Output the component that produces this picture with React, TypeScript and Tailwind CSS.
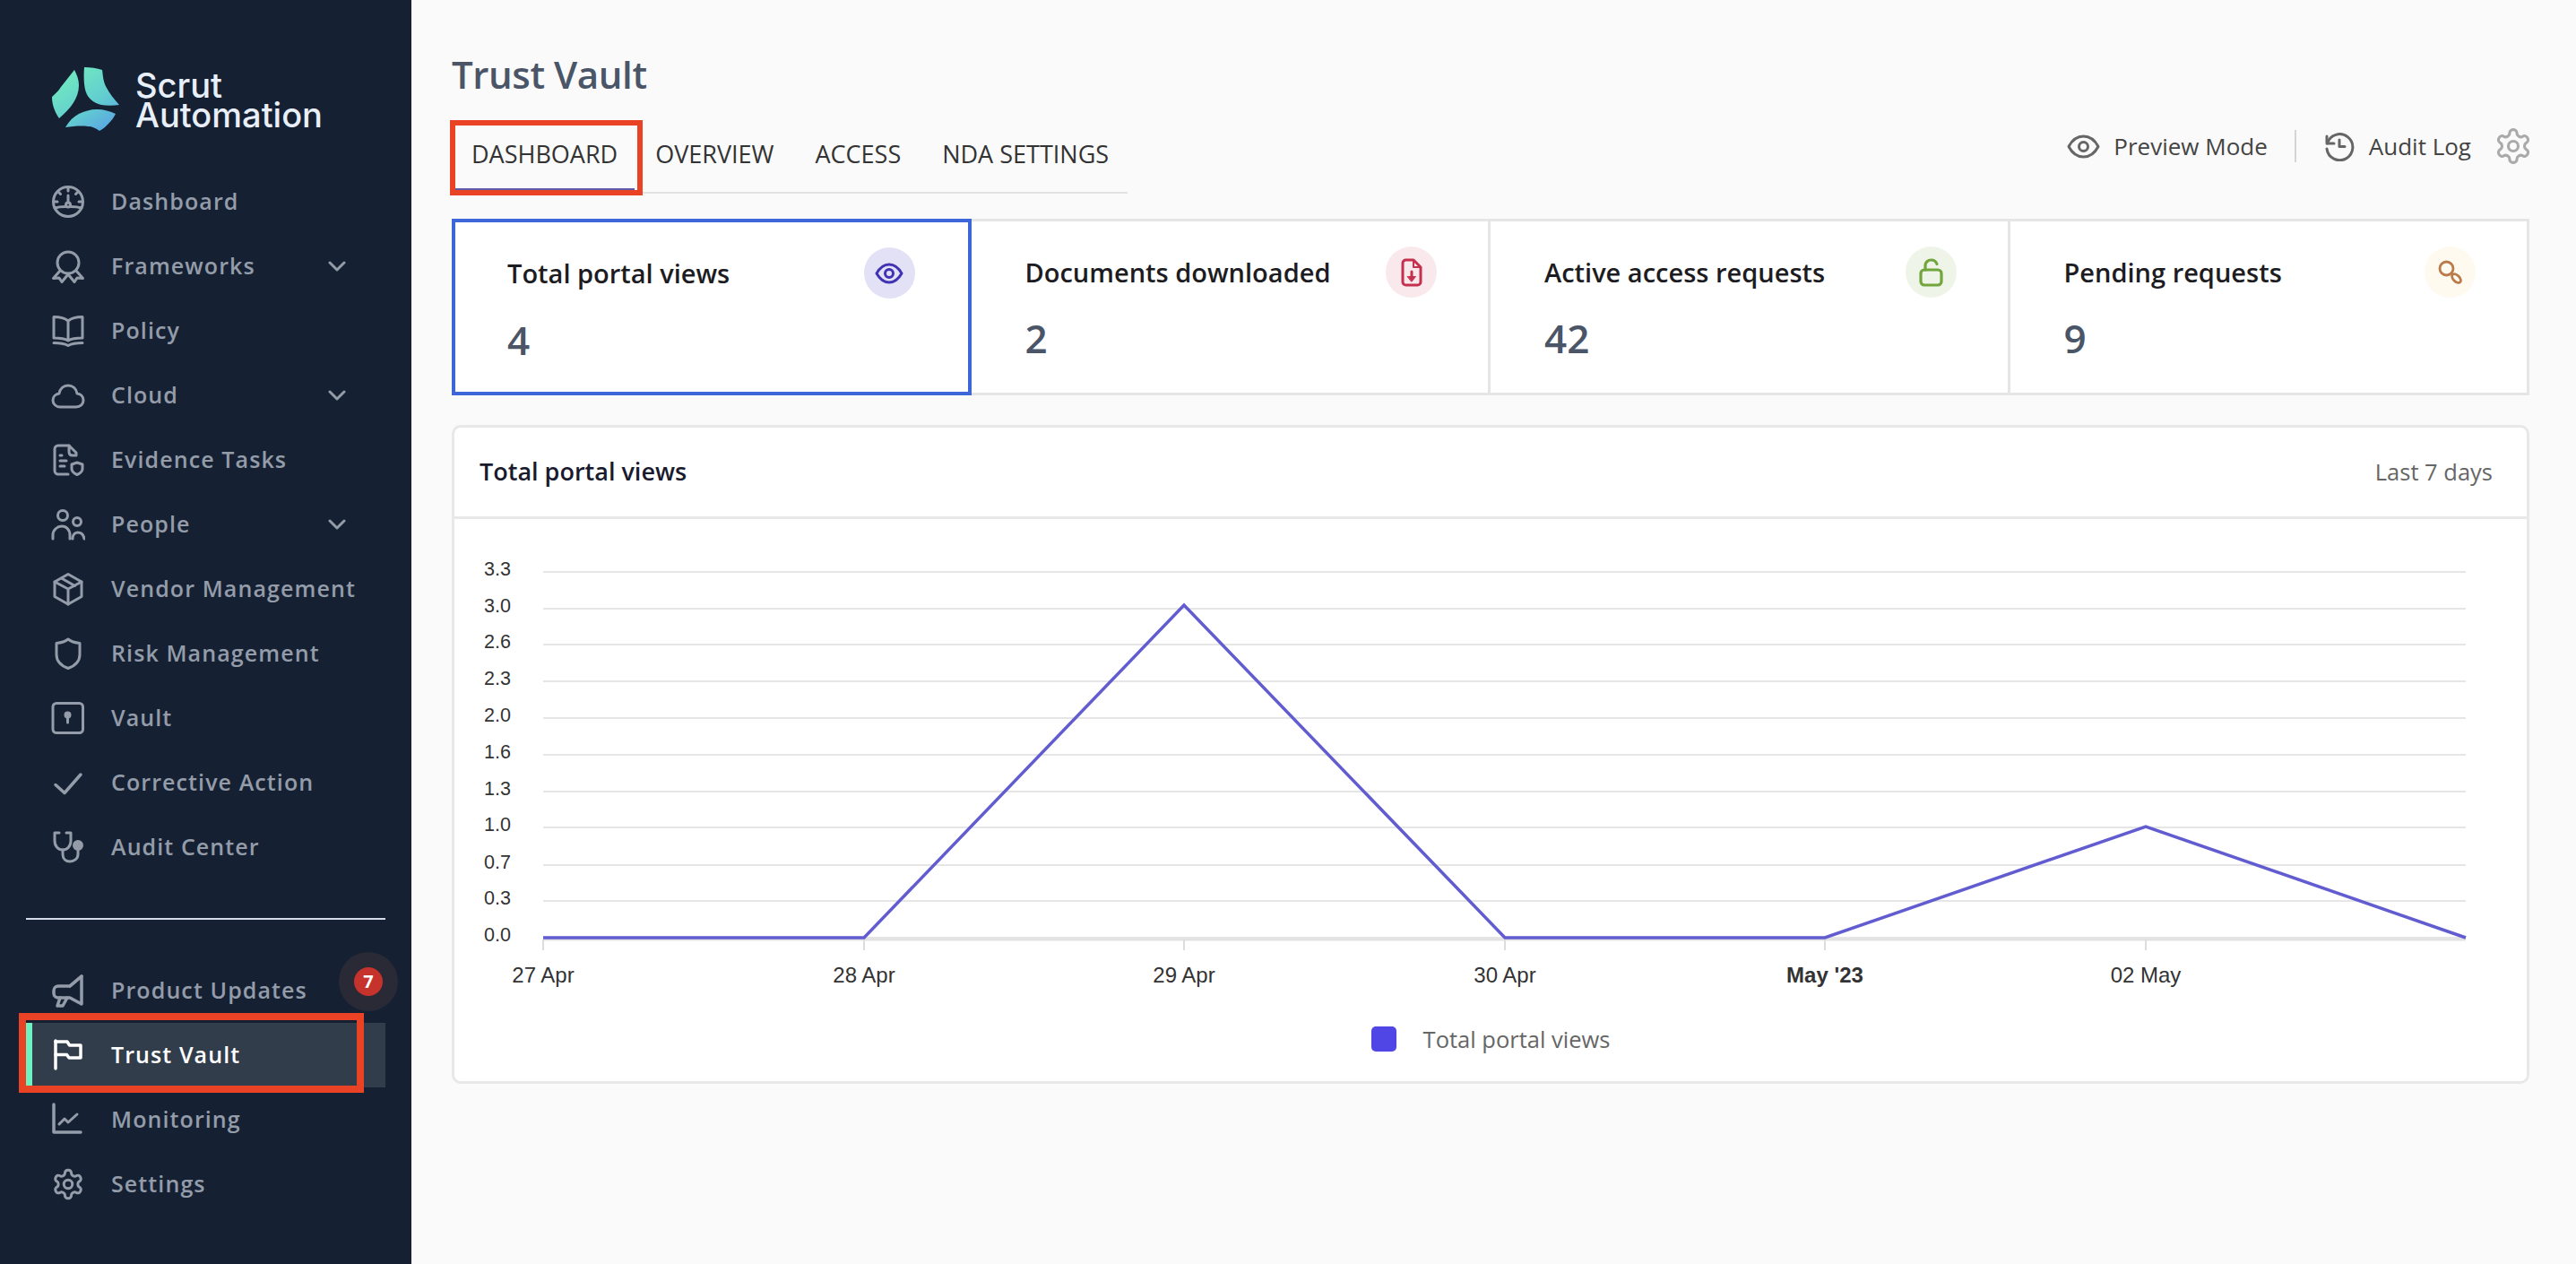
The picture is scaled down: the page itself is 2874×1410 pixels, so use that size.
import type { ReactNode } from 'react';

const stroke = {
  fill: 'none',
  stroke: 'currentColor',
  strokeWidth: 3,
  strokeLinecap: 'round' as const,
  strokeLinejoin: 'round' as const,
};

const gearPath =
  'M12.22 2h-.44a2 2 0 0 0-2 2v.18a2 2 0 0 1-1 1.73l-.43.25a2 2 0 0 1-2 0l-.15-.08a2 2 0 0 0-2.73.73l-.22.38a2 2 0 0 0 .73 2.73l.15.1a2 2 0 0 1 1 1.72v.51a2 2 0 0 1-1 1.74l-.15.09a2 2 0 0 0-.73 2.73l.22.38a2 2 0 0 0 2.73.73l.15-.08a2 2 0 0 1 2 0l.43.25a2 2 0 0 1 1 1.73V20a2 2 0 0 0 2 2h.44a2 2 0 0 0 2-2v-.18a2 2 0 0 1 1-1.73l.43-.25a2 2 0 0 1 2 0l.15.08a2 2 0 0 0 2.73-.73l.22-.39a2 2 0 0 0-.73-2.73l-.15-.08a2 2 0 0 1-1-1.74v-.5a2 2 0 0 1 1-1.74l.15-.09a2 2 0 0 0 .73-2.73l-.22-.38a2 2 0 0 0-2.73-.73l-.15.08a2 2 0 0 1-2 0l-.43-.25a2 2 0 0 1-1-1.73V4a2 2 0 0 0-2-2z';

function Icon({ size = 38, children }: { size?: number; children: ReactNode }) {
  return (
    <svg width={size} height={size} viewBox="0 0 38 38" {...stroke}>
      {children}
    </svg>
  );
}

const navIcons: Record<string, ReactNode> = {
  dashboard: (
    <>
      <circle cx="19" cy="19" r="16.5" />
      <path d="M19 3v4M8 8l2.5 2.5M30 8l-2.5 2.5M3 19h4M35 19h-4" />
      <path d="M19 12v8" />
      <circle cx="19" cy="22.5" r="2.5" />
      <path d="M4 26c5-1.5 8-1.5 12-1.5M34 26c-5-1.5-8-1.5-12-1.5" />
    </>
  ),
  frameworks: (
    <>
      <circle cx="19" cy="15" r="12" />
      <path d="M10 24 2.5 32.5l6.5-.5 3 4.5L19 28l7 8.5 3-4.5 6.5.5L28 24" />
    </>
  ),
  policy: (
    <>
      <path d="M19 8c-4-3.5-9-4.5-16-4.5V27c7 0 12 .5 16 3 4-2.5 9-3 16-3V3.5C28 3.5 23 4.5 19 8Zm0 0v22" />
      <path d="M3 32.5c6 0 11 .3 16 3 5-2.7 10-3 16-3" />
    </>
  ),
  cloud: (
    <path d="M10 32h18c4.5 0 8-3 8-7.5S32.5 17 29 17c-1-6-5.5-9-10-9-5 0-9 3.5-10 9-4 .5-7 3.5-7 7.5S5.500 32 10 32Z" />
  ),
  evidence: (
    <>
      <path d="M20 3H8a4 4 0 0 0-4 4v24a4 4 0 0 0 4 4h11" />
      <path d="M20 3l8 8v3h-4c-2.5 0-4-1.5-4-4Z" />
      <path d="M10 14h2M10 20h7M10 26h5" />
      <path d="M29 22l6 2v5c0 3-2.5 5-6 6.5-3.5-1.5-6-3.5-6-6.5v-5l6-2Z" />
    </>
  ),
  people: (
    <>
      <circle cx="13" cy="9" r="5.5" />
      <circle cx="29" cy="16" r="4.5" />
      <path d="M2 35v-4c0-6 5-10 10-10s9 4 9 10v4M24 35c0-5 3-7 6-7s6 2 7 7" />
    </>
  ),
  vendor: (
    <>
      <path d="M19 2.5 34 11v16.5L19 36 4 27.5V11Z" />
      <path d="M4 11l15 8 15-8M19 19v17M11.5 7l15 8.5" />
    </>
  ),
  risk: <path d="M19 3c-3 2.5-8 4-13 4.5V20c0 8 6 13 13 15.5C26 33 32 28 32 20V7.5C27 7 22 5.5 19 3Z" />,
  vault: (
    <>
      <rect x="2" y="2.5" width="33.5" height="33" rx="4" />
      <circle cx="18.5" cy="15.5" r="2.5" fill="currentColor" />
      <path d="M18.5 15.5v8.5" />
    </>
  ),
  corrective: <path d="M5 21.5 15 30.5 33 10" strokeWidth="3.5" />,
  audit: (
    <>
      <path d="M9 3H4v9c0 6 4 10 9 10s9-4 9-10V3h-5" />
      <path d="M13 22v5c0 5 3.5 8 8 8s9-3 9-8v-4" />
      <circle cx="30" cy="17" r="4.5" fill="currentColor" />
    </>
  ),
  updates: (
    <>
      <path d="M34 3v31l-13-7H8a5 5 0 0 1-5-5v-3a5 5 0 0 1 5-5h13Z" strokeWidth="3.5" />
      <path d="M21 14l13-11M10 27l-3 9h6l5-9" strokeWidth="3.5" />
    </>
  ),
  trust: (
    <>
      <path d="M5 3v31" strokeWidth="3.5" />
      <path d="M5 4h13l2.5 4H33v14H20l-2.500-3.500H5" strokeWidth="3.5" />
    </>
  ),
  monitoring: (
    <>
      <path d="M3 2v31h30" strokeWidth="3.5" />
      <path d="M9 24l6-6 4 4 10-9" />
    </>
  ),
  settings: (
    <g transform="scale(1.583)" strokeWidth="1.9">
      <path d={gearPath} />
      <circle cx="12" cy="12" r="3" />
    </g>
  ),
};

const mainNav = [
  { key: 'dashboard', label: 'Dashboard' },
  { key: 'frameworks', label: 'Frameworks', arrow: true },
  { key: 'policy', label: 'Policy' },
  { key: 'cloud', label: 'Cloud', arrow: true },
  { key: 'evidence', label: 'Evidence Tasks' },
  { key: 'people', label: 'People', arrow: true },
  { key: 'vendor', label: 'Vendor Management' },
  { key: 'risk', label: 'Risk Management' },
  { key: 'vault', label: 'Vault' },
  { key: 'corrective', label: 'Corrective Action' },
  { key: 'audit', label: 'Audit Center' },
];

function NavRow({
  icon,
  label,
  arrow,
  active,
  children,
}: {
  icon: string;
  label: string;
  arrow?: boolean;
  active?: boolean;
  children?: ReactNode;
}) {
  return (
    <div
      className={
        active
          ? 'relative flex h-[72px] items-center border-l-[7px] border-[#6ef2bf] bg-[#323d4b] pl-[21px] text-white'
          : 'relative flex h-[72px] items-center border-l-[7px] border-transparent pl-[21px] text-[#949ca9]'
      }
    >
      <span className="flex w-[38px] justify-center">
        <Icon>{navIcons[icon]}</Icon>
      </span>
      <span className="ml-[29px] text-[25px] font-semibold tracking-[1.1px]">{label}</span>
      {arrow && (
        <svg className="absolute left-[330px]" width="20" height="12" viewBox="0 0 20 12" fill="none" stroke="currentColor" strokeWidth="3" strokeLinecap="round" strokeLinejoin="round">
          <path d="M2 2l8 8 8-8" />
        </svg>
      )}
      {children}
    </div>
  );
}

function Logo() {
  return (
    <svg width="76" height="72" viewBox="57 75 76 72">
      <defs>
        <linearGradient id="logoFill" gradientUnits="userSpaceOnUse" x1="70" y1="78" x2="118" y2="146">
          <stop offset="0" stopColor="#72ecbe" />
          <stop offset="0.6" stopColor="#62cdd0" />
          <stop offset="1" stopColor="#5aa6e2" />
        </linearGradient>
      </defs>
      <path fill="url(#logoFill)" d="M82 78c3 6 5 11 5 17 0 14-9 26-22 37-4-6-8-14-8-24 3-3 7-6 10-11 5-6 10-13 15-19Z" />
      <path fill="url(#logoFill)" d="M93 75c7 0 14 1 20 3 1 7 1 13 5 20 3 6 8 12 14 19-7 1-14 1-20 0-9-2-15-8-17-14-2-5-3-16-2-28Z" />
      <path fill="url(#logoFill)" d="M72 142c4-7 9-12 15-15 6-3 13-5 20-5 8 0 15 2 21 5-2 4-5 8-8 11-3 3-6 6-10 8-4-3-8-5-13-5-8-1-17 0-25 1Z" />
    </svg>
  );
}

const cards = [
  { title: 'Total portal views', value: '4', circle: 'bg-[#e3e1f5]', color: 'text-[#3f32b5]', icon: 'eye' },
  { title: 'Documents downloaded', value: '2', circle: 'bg-[#f9e9ec]', color: 'text-[#c5304f]', icon: 'file' },
  { title: 'Active access requests', value: '42', circle: 'bg-[#eff4e9]', color: 'text-[#72a63c]', icon: 'lock' },
  { title: 'Pending requests', value: '9', circle: 'bg-[#fefaef]', color: 'text-[#bb7a4a]', icon: 'key' },
];

function CardIcon({ name }: { name: string }) {
  if (name === 'eye') {
    return (
      <svg width="32" height="24" viewBox="0 0 32 24" fill="none" stroke="currentColor" strokeWidth="3" strokeLinejoin="round">
        <path d="M2 12C6 5 11 2 16 2s10 3 14 10c-4 7-9 10-14 10S6 19 2 12Z" />
        <circle cx="16" cy="12" r="4.5" />
      </svg>
    );
  }
  if (name === 'file') {
    return (
      <svg width="24" height="32" viewBox="0 0 24 32" fill="none" stroke="currentColor" strokeWidth="3" strokeLinejoin="round" strokeLinecap="round">
        <path d="M14 2H5.5A3.5 3.5 0 0 0 2 5.5v21A3.5 3.5 0 0 0 5.5 30h13a3.5 3.5 0 0 0 3.5-3.5V10Z" />
        <path d="M14 2v8h8" strokeWidth="2" />
        <path d="M12 15v7" />
        <path d="M7.5 20.5h9L12 26Z" fill="currentColor" strokeWidth="1" />
      </svg>
    );
  }
  if (name === 'lock') {
    return (
      <svg width="27" height="32" viewBox="0 0 27 32" fill="none" stroke="currentColor" strokeWidth="3.2" strokeLinejoin="round" strokeLinecap="round">
        <rect x="2" y="13" width="23" height="17" rx="4" />
        <path d="M7 13V8C7 4.5 10 2 13.5 2c3 0 5.5 1.5 6.5 4.5" />
      </svg>
    );
  }
  return (
    <svg width="28" height="28" viewBox="0 0 28 28" fill="none" stroke="currentColor" strokeWidth="2.8">
      <circle cx="9.5" cy="9.5" r="7.5" />
      <ellipse cx="20.5" cy="20.5" rx="6" ry="3.5" transform="rotate(45 20.5 20.5)" />
    </svg>
  );
}

// chart numbers are in page pixels, the viewBox starts at the svg's own corner
const chartLeft = 507;
const chartTop = 579;
const yTicks = [
  ['3.3', 638],
  ['3.0', 679],
  ['2.6', 719],
  ['2.3', 760],
  ['2.0', 801],
  ['1.6', 842],
  ['1.3', 883],
  ['1.0', 923],
  ['0.7', 965],
  ['0.3', 1005],
  ['0.0', 1046],
] as const;
const xTicks = [
  ['27 Apr', 606],
  ['28 Apr', 964],
  ['29 Apr', 1321],
  ['30 Apr', 1679],
  ["May '23", 2036],
  ['02 May', 2394],
] as const;
const linePoints = [
  [606, 1046],
  [964, 1046],
  [1321, 675],
  [1679, 1046],
  [2036, 1046],
  [2394, 922],
  [2751, 1046],
];

function Chart() {
  const chartFont = "'Liberation Sans', Arial, sans-serif";
  return (
    <svg width="2312" height="540" viewBox={`${chartLeft} ${chartTop} 2312 540`} className="block">
      {yTicks.map(([label, y]) => (
        <g key={label}>
          <line x1="606" x2="2751" y1={y} y2={y} stroke="#e6e6e6" strokeWidth="2" />
          <text x="570" y={y + 4} textAnchor="end" fontSize="21.5" fill="#333" fontFamily={chartFont}>
            {label}
          </text>
        </g>
      ))}
      <line x1="606" x2="2751" y1="1048" y2="1048" stroke="#e2e2e2" strokeWidth="3" />
      {xTicks.map(([label, x]) => (
        <g key={label}>
          <line x1={x} x2={x} y1="1048" y2="1060" stroke="#dcdcdc" strokeWidth="2" />
          <text
            x={x}
            y="1096"
            textAnchor="middle"
            fontSize="24"
            fill="#333"
            fontFamily={chartFont}
            fontWeight={label === "May '23" ? 700 : 400}
          >
            {label}
          </text>
        </g>
      ))}
      <polyline points={linePoints.map((p) => p.join(',')).join(' ')} fill="none" stroke="#625cd1" strokeWidth="3.5" />
    </svg>
  );
}

export default function App() {
  return (
    <div className="flex h-[1410px] w-full overflow-hidden bg-[#fafafa] font-['Open_Sans',sans-serif]">
      <aside className="h-full w-[459px] shrink-0 bg-[#152133]">
        <div className="flex h-[189px] items-start pl-[58px] pt-[75px]">
          <Logo />
          <div className="ml-[17px] mt-[4px] font-['Inter',sans-serif] text-[38px] font-medium leading-[33px] text-[#e9eff9]">
            Scrut
            <br />
            Automation
          </div>
        </div>

        <nav className="mx-[29px]">
          {mainNav.map((item) => (
            <NavRow key={item.key} icon={item.key} label={item.label} arrow={item.arrow} />
          ))}
          <div className="mb-[43px] mt-[43px] h-[2px] bg-[#d5dbe8]" />
          <NavRow icon="updates" label="Product Updates">
            <div className="absolute left-[342px] top-[-7px] flex h-[66px] w-[66px] items-center justify-center rounded-full bg-[#2a2a36]">
              <span className="flex h-[32px] w-[32px] items-center justify-center rounded-full bg-[#c6322c] text-[20px] font-bold text-white">
                7
              </span>
            </div>
          </NavRow>
          <NavRow icon="trust" label="Trust Vault" active>
            <div className="absolute left-[-15px] top-[-11px] h-[89px] w-[385px] border-[8px] border-[#e94225]" />
          </NavRow>
          <NavRow icon="monitoring" label="Monitoring" />
          <NavRow icon="settings" label="Settings" />
        </nav>
      </aside>

      <main className="flex-1 pl-[45px] pr-[52px] pt-[53px]">
        <h1 className="text-[42px] font-semibold leading-[60px] tracking-[-0.4px] text-[#4a5568]">Trust Vault</h1>

        <div className="mt-[21px] flex items-start justify-between">
          <div className="flex border-b-2 border-[#e2e2e2] pb-[2px] pr-[21px] text-[27px] leading-none text-[#333]">
            <div className="relative flex h-[78px] items-center border-b-2 border-[#5e5aa8] pb-[2px] pl-[22px] pr-[19px]">
              DASHBOARD
              <div className="absolute left-[-2px] top-0 h-[84px] w-[215px] border-[6px] border-[#e94225]" />
            </div>
            <div className="flex h-[78px] items-center px-[23px] pb-[4px]">OVERVIEW</div>
            <div className="flex h-[78px] items-center px-[23px] pb-[4px]">ACCESS</div>
            <div className="flex h-[78px] items-center pb-[4px] pl-[23px]">NDA SETTINGS</div>
          </div>

          <div className="mt-[9px] flex h-[40px] items-center text-[26px] text-[#444]">
            <svg width="37" height="27" viewBox="0 0 37 27" fill="none" stroke="#666" strokeWidth="3" strokeLinejoin="round">
              <path d="M2 13.5C6 6 12 2 18.5 2S31 6 35 13.5C31 21 25 25 18.5 25S6 21 2 13.5Z" />
              <circle cx="18.5" cy="13.5" r="5" />
            </svg>
            <span className="ml-[15px]">Preview Mode</span>
            <span className="ml-[30px] h-[36px] w-[2px] bg-[#d5d5d5]" />
            <svg className="ml-[31px]" width="34" height="34" viewBox="0 0 34 34" fill="none" stroke="#666" strokeWidth="3" strokeLinecap="round" strokeLinejoin="round">
              <path d="M3 6v8h8" />
              <path d="M3.5 14A14.5 14.500 0 1 1 3 20" />
              <path d="M17 10v7.5h6" />
            </svg>
            <span className="ml-[16px]">Audit Log</span>
            <svg className="-mr-[4px] ml-[25px]" width="44" height="44" viewBox="0 0 24 24" fill="none" stroke="#aaa" strokeWidth="1.7" strokeLinecap="round" strokeLinejoin="round">
              <path d={gearPath} />
              <circle cx="12" cy="12" r="3" />
            </svg>
          </div>
        </div>

        <div className="mt-[28px] grid grid-cols-4">
          {cards.map((card, i) => (
            <div
              key={card.title}
              className={
                i === 0
                  ? 'h-[197px] border-[4px] border-[#3d66d9] bg-white pl-[58px] pr-[59px] pt-[28px]'
                  : 'h-[197px] border-y-[3px] border-r-[3px] border-[#e5e5e5] bg-white pl-[60px] pr-[57px] pt-[28px]'
              }
            >
              <div className="flex items-center justify-between">
                <span className="text-[29px] font-semibold text-[#1c1c22]">{card.title}</span>
                <span className={`flex h-[57px] w-[57px] items-center justify-center rounded-full ${card.circle} ${card.color}`}>
                  <CardIcon name={card.icon} />
                </span>
              </div>
              <div className={i === 0 ? 'mt-[24px] text-[44px] font-semibold leading-[44px] text-[#4a5568]' : 'mt-[23px] text-[44px] font-semibold leading-[44px] text-[#4a5568]'}>
                {card.value}
              </div>
            </div>
          ))}
        </div>

        <section className="mt-[33px] h-[735px] rounded-[10px] border-[3px] border-[#e8e8e8] bg-white">
          <div className="flex h-[102px] items-center justify-between border-b-[3px] border-[#e8e8e8] pl-[28px] pr-[38px]">
            <span className="text-[27px] font-semibold text-[#1a1a2e]">Total portal views</span>
            <span className="text-[25.5px] text-[#666]">Last 7 days</span>
          </div>
          <Chart />
          <div className="flex h-[80px] items-center justify-center gap-[30px]">
            <span className="h-[28px] w-[28px] rounded-[5px] bg-[#4f46e5]" />
            <span className="text-[25.5px] text-[#666]">Total portal views</span>
          </div>
        </section>
      </main>
    </div>
  );
}
